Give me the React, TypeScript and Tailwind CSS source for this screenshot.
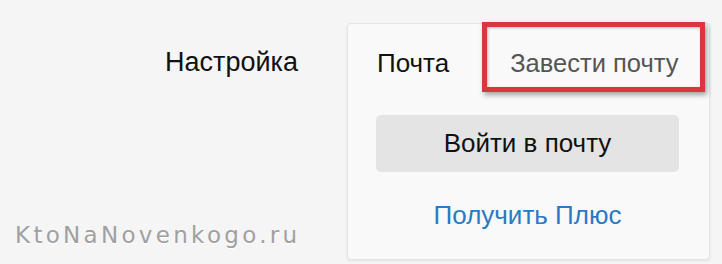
export default function App() {
  return (
    <div
      className="flex h-[264px] w-[722px] overflow-hidden bg-[#f5f5f5] text-[#111]"
      style={{ fontFamily: '"Liberation Sans", Arial, sans-serif' }}
    >
      <div className="flex w-[347px] flex-col">
        <div className="pl-[165px] pt-[47px] text-[27px] leading-[31px]">Настройка</div>
        <div
          className="mt-auto pb-[15px] pl-[15px] text-[23px] leading-[27px] tracking-[3.3px] text-[#a0a0a0]"
          style={{ fontFamily: '"DejaVu Sans", Verdana, sans-serif', textShadow: "0 1px 0 #fff" }}
        >
          KtoNaNovenkogo.ru
        </div>
      </div>

      <div className="mt-[23px] flex h-[237px] w-[363px] flex-col rounded-[4px] border border-[#e4e4e4] bg-[#f9f9f9] shadow-[0_1px_3px_rgba(0,0,0,0.08)]">
        <div className="flex items-baseline gap-[61px] pl-[29px] pt-[24px] text-[26px] leading-[30px]">
          <span>Почта</span>
          <span className="relative text-[25.5px] text-[#555]">
            Завести почту
            <span className="pointer-events-none absolute -top-[26px] -bottom-[14px] -left-[28px] -right-[27px] border-[5px] border-[#d9363e] shadow-[2px_3px_5px_rgba(0,0,0,0.35),inset_1px_1px_3px_rgba(0,0,0,0.25)]" />
          </span>
        </div>

        <button className="ml-[28px] mt-[37px] flex h-[57px] w-[303px] items-center justify-center rounded-[5px] bg-[#e4e4e4] pb-[2px] text-[26px] leading-[30px] text-[#111]">
          Войти в почту
        </button>

        <a className="ml-[28px] mt-[28px] w-[303px] text-center text-[26px] leading-[30px] text-[#2a7ac4]">
          Получить Плюс
        </a>
      </div>
    </div>
  );
}
